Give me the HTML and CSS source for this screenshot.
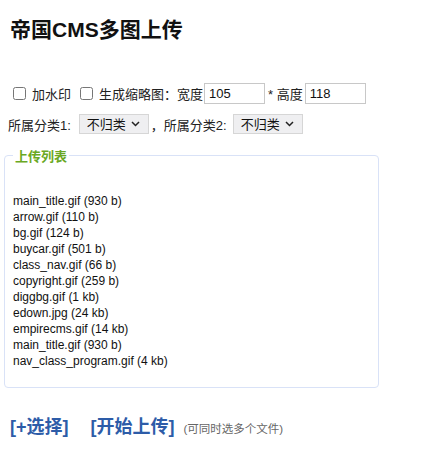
FILE: index.html
```html
<!DOCTYPE html>
<html lang="zh-CN">
<head>
<meta charset="utf-8">
<title>帝国CMS多图上传</title>
<link rel="stylesheet" href="styles.css">
</head>
<body>
<h1 class="title">帝国CMS多图上传</h1>
<div class="opts">
  <div class="row row-mark">
    <label class="chk"><input type="checkbox"> 加水印</label>
    <label class="chk chk2"><input type="checkbox"> 生成缩略图：宽度</label>
    <input class="num" type="text" value="105">
    <span class="star">* 高度</span>
    <input class="num" type="text" value="118">
  </div>
  <div class="row row-cls">
    <span>所属分类1:</span>
    <select class="sel"><option>不归类</option></select>
    <span>，所属分类2:</span>
    <select class="sel"><option>不归类</option></select>
  </div>
</div>
<fieldset class="box">
  <legend class="legend">上传列表</legend>
  <ul class="files">
    <li>main_title.gif (930 b)</li>
    <li>arrow.gif (110 b)</li>
    <li>bg.gif (124 b)</li>
    <li>buycar.gif (501 b)</li>
    <li>class_nav.gif (66 b)</li>
    <li>copyright.gif (259 b)</li>
    <li>diggbg.gif (1 kb)</li>
    <li>edown.jpg (24 kb)</li>
    <li>empirecms.gif (14 kb)</li>
    <li>main_title.gif (930 b)</li>
    <li>nav_class_program.gif (4 kb)</li>
  </ul>
</fieldset>
<div class="actions">
  <a class="btn" href="#">[+选择]</a>
  <a class="btn" href="#">[开始上传]</a>
  <span class="hint">(可同时选多个文件)</span>
</div>
</body>
</html>
```

FILE: styles.css
```css
html, body {
  margin: 0;
  padding: 0;
  background: #ffffff;
}
body {
  font-family: "Liberation Sans", Arial, "Noto Sans CJK SC", sans-serif;
  font-size: 13px;
  color: #222222;
}
.title {
  margin: 0;
  padding: 16px 0 0 10px;
  font-size: 21px;
  line-height: 28px;
  font-weight: bold;
  color: #111111;
}
.opts {
  padding: 38px 0 0 8px;
}
.row {
  display: flex;
  align-items: center;
}
.row-mark {
  height: 22px;
}
.row-cls {
  margin-top: 9px;
  height: 22px;
}
.chk {
  display: flex;
  align-items: center;
  gap: 3px;
}
.chk input {
  margin: 0 3px 0 5px;
  width: 13px;
  height: 13px;
}
.chk2 {
  margin-left: 4px;
  margin-right: 1px;
}
.star {
  margin: 0 2px 0 3px;
}
.num {
  width: 61px;
  height: 21px;
  box-sizing: border-box;
  border: 1px solid #c8c8c8;
  padding: 1px 4px;
  font-family: inherit;
  font-size: 13px;
  color: #111111;
  margin: 0;
}
.sel {
  -webkit-appearance: none;
  appearance: none;
  width: 70px;
  height: 20px;
  box-sizing: border-box;
  margin: 0 2px 0 8px;
  padding: 0 0 0 7px;
  border: 1px solid #d6d6d6;
  border-radius: 0;
  background-color: #efeff1;
  background-image: url("data:image/svg+xml,%3Csvg xmlns='http://www.w3.org/2000/svg' width='9' height='6' viewBox='0 0 9 6'%3E%3Cpath d='M1 1l3.5 3.5L8 1' fill='none' stroke='%23222' stroke-width='1.5'/%3E%3C/svg%3E");
  background-repeat: no-repeat;
  background-position: right 8px center;
  font-family: inherit;
  font-size: 13px;
  color: #111111;
}
.sel:last-child {
  margin-left: 6px;
}
.box {
  margin: 11px 0 0 4px;
  width: 375px;
  height: 242px;
  box-sizing: border-box;
  padding: 0 0 0 8px;
  border: 1px solid #d9e2f7;
  border-radius: 4px;
}
.legend {
  padding: 0 2px;
  margin-left: 0;
  color: #6aa823;
  font-weight: bold;
  font-size: 13px;
}
.files {
  list-style: none;
  margin: 28px 0 0 0;
  padding: 0;
  font-size: 12px;
  line-height: 16px;
  color: #111111;
}
.actions {
  display: flex;
  align-items: baseline;
  padding: 24px 0 0 10px;
}
.btn {
  font-size: 18px;
  font-weight: bold;
  color: #2d5ca8;
  text-decoration: none;
  margin-right: 22px;
}
.btn + .btn {
  margin-right: 9px;
}
.hint {
  font-size: 11.5px;
  color: #666666;
}
```
